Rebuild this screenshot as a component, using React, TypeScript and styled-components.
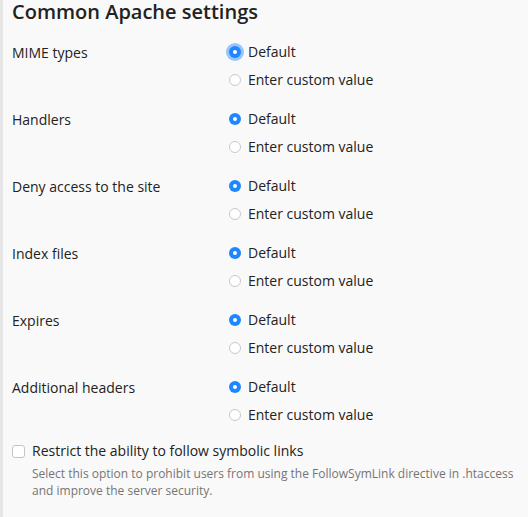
import React from 'react'
import styled, { createGlobalStyle } from 'styled-components'

const GlobalStyle = createGlobalStyle`
  html, body {
    margin: 0;
    padding: 0;
    background: #f9f9f9;
  }
  body {
    font-family: "Open Sans", "Noto Sans", sans-serif;
    color: #222;
  }
`

const Page = styled.div`
  min-height: 517px;
  border-left: 3px solid #e6e6e6;
  padding: 0 0 0 9px;
  box-sizing: border-box;
`

const Title = styled.h2`
  margin: 0;
  font-size: 20px;
  line-height: 24px;
  font-weight: 600;
  color: #222;
`

const Settings = styled.div`
  display: flex;
  flex-direction: column;
  gap: 19px;
  margin-top: 18px;
`

const Row = styled.div`
  display: grid;
  grid-template-columns: 217px 1fr;
`

const Label = styled.div`
  font-size: 14px;
  line-height: 20px;
  margin-top: 1px;
  color: #222;
`

const Options = styled.div`
  display: flex;
  flex-direction: column;
  gap: 8px;
`

const Option = styled.label`
  display: flex;
  align-items: center;
  gap: 7px;
  font-size: 14px;
  line-height: 20px;
  color: #222;
`

const Radio = styled.span<{ $checked?: boolean; $focused?: boolean }>`
  width: 12px;
  height: 12px;
  box-sizing: border-box;
  border-radius: 50%;
  flex: none;
  position: relative;
  background: ${p => (p.$checked ? '#1e86ff' : '#fff')};
  border: ${p => (p.$checked ? 'none' : '1px solid #c9c9c9')};
  box-shadow: ${p => (p.$focused ? '0 0 0 3px rgba(30, 134, 255, 0.45)' : 'none')};

  &::after {
    content: '';
    display: ${p => (p.$checked ? 'block' : 'none')};
    position: absolute;
    left: 4px;
    top: 4px;
    width: 4px;
    height: 4px;
    border-radius: 50%;
    background: #fff;
  }
`

const CheckRow = styled.label`
  display: flex;
  align-items: center;
  gap: 7px;
  margin-top: 16px;
  font-size: 14px;
  line-height: 20px;
  color: #222;
`

const Checkbox = styled.span`
  width: 13px;
  height: 13px;
  box-sizing: border-box;
  border: 1px solid #c4c4c4;
  border-radius: 3px;
  background: #fff;
  flex: none;
`

const Hint = styled.p`
  margin: 4px 0 0 20px;
  font-size: 12px;
  line-height: 17px;
  color: #757575;
  max-width: 500px;
`

const settings = [
  'MIME types',
  'Handlers',
  'Deny access to the site',
  'Index files',
  'Expires',
  'Additional headers',
]

export default function App() {
  return (
    <>
      <GlobalStyle />
      <Page>
        <Title>Common Apache settings</Title>
        <Settings>
          {settings.map((name, i) => (
            <Row key={name}>
              <Label>{name}</Label>
              <Options>
                <Option>
                  <Radio $checked $focused={i === 0} />
                  Default
                </Option>
                <Option>
                  <Radio />
                  Enter custom value
                </Option>
              </Options>
            </Row>
          ))}
        </Settings>
        <CheckRow>
          <Checkbox />
          Restrict the ability to follow symbolic links
        </CheckRow>
        <Hint>
          Select this option to prohibit users from using the FollowSymLink directive in .htaccess
          and improve the server security.
        </Hint>
      </Page>
    </>
  )
}
